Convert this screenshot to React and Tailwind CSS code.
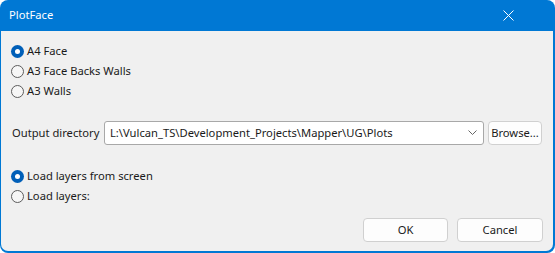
import React, { useState } from 'react'

const font = { fontFamily: '"Noto Sans", "Open Sans", sans-serif' }

const Radio = ({ checked, label, onClick }) => (
  <label className="flex items-center h-[20px] cursor-default select-none" onClick={onClick}>
    {checked ? (
      <span className="w-[13px] h-[13px] rounded-full bg-[#005fb8] flex items-center justify-center">
        <span className="w-[5px] h-[5px] rounded-full bg-white"></span>
      </span>
    ) : (
      <span className="w-[13px] h-[13px] rounded-full border border-[#5c5c5c] bg-[#f6f6f6]"></span>
    )}
    <span className="ml-[3px] text-[11.2px] text-[#1a1a1a]">{label}</span>
  </label>
)

const Button = ({ children, className = '' }) => (
  <button className={`h-[24px] rounded-[4px] border border-[#d0d0d0] bg-[#fdfdfd] text-[11.2px] text-[#1a1a1a] ${className}`}>
    {children}
  </button>
)

export default function App() {
  const [plot, setPlot] = useState('a4')
  const [layers, setLayers] = useState('screen')

  return (
    <div className="w-[555px] h-[253px] bg-white" style={font}>
      <div className="w-full h-full rounded-[8px] bg-[#0078d4] flex flex-col overflow-hidden">
        {/* Title bar */}
        <div className="h-[31px] flex items-center justify-between pl-[9px] pr-[41px] shrink-0">
          <span className="text-[11.2px] text-white">PlotFace</span>
          <svg width="11" height="11" viewBox="0 0 11 11" className="text-white">
            <path d="M0.5 0.5 L10.5 10.5 M10.5 0.5 L0.5 10.5" stroke="currentColor" strokeWidth="1" />
          </svg>
        </div>

        {/* Content */}
        <div className="flex-1 ml-[1px] mr-[2px] mb-[2px] bg-[#f0f0f0] rounded-b-[7px] pt-[10px] pl-[10px] pr-[10px] flex flex-col">
          <div className="flex flex-col">
            <Radio checked={plot === 'a4'} label="A4 Face" onClick={() => setPlot('a4')} />
            <Radio checked={plot === 'a3fb'} label="A3 Face Backs Walls" onClick={() => setPlot('a3fb')} />
            <Radio checked={plot === 'a3w'} label="A3 Walls" onClick={() => setPlot('a3w')} />
          </div>

          <div className="flex items-center mt-[20px] h-[24px]">
            <span className="ml-[1px] text-[11.2px] text-[#1a1a1a] w-[92px] shrink-0 whitespace-nowrap">Output directory</span>
            <div className="w-[380px] shrink-0 h-[24px] bg-white border border-[#a8a8a8] rounded-[3px] flex items-center justify-between pl-[5px] pr-[6px]">
              <span className="text-[11.2px] text-[#1a1a1a] whitespace-nowrap">L:\Vulcan_TS\Development_Projects\Mapper\UG\Plots</span>
              <svg width="9" height="6" viewBox="0 0 9 6">
                <path d="M0.5 0.5 L4.5 4.5 L8.5 0.5" fill="none" stroke="#666" strokeWidth="1" />
              </svg>
            </div>
            <Button className="ml-[4px] w-[54px] h-[23px] shrink-0">Browse...</Button>
          </div>

          <div className="flex flex-col mt-[21px]">
            <Radio checked={layers === 'screen'} label="Load layers from screen" onClick={() => setLayers('screen')} />
            <Radio checked={layers === 'list'} label="Load layers:" onClick={() => setLayers('list')} />
          </div>

          <div className="flex justify-end gap-[9px] mt-[12px]">
            <Button className="w-[85px]">OK</Button>
            <Button className="w-[86px]">Cancel</Button>
          </div>
        </div>
      </div>
    </div>
  )
}
